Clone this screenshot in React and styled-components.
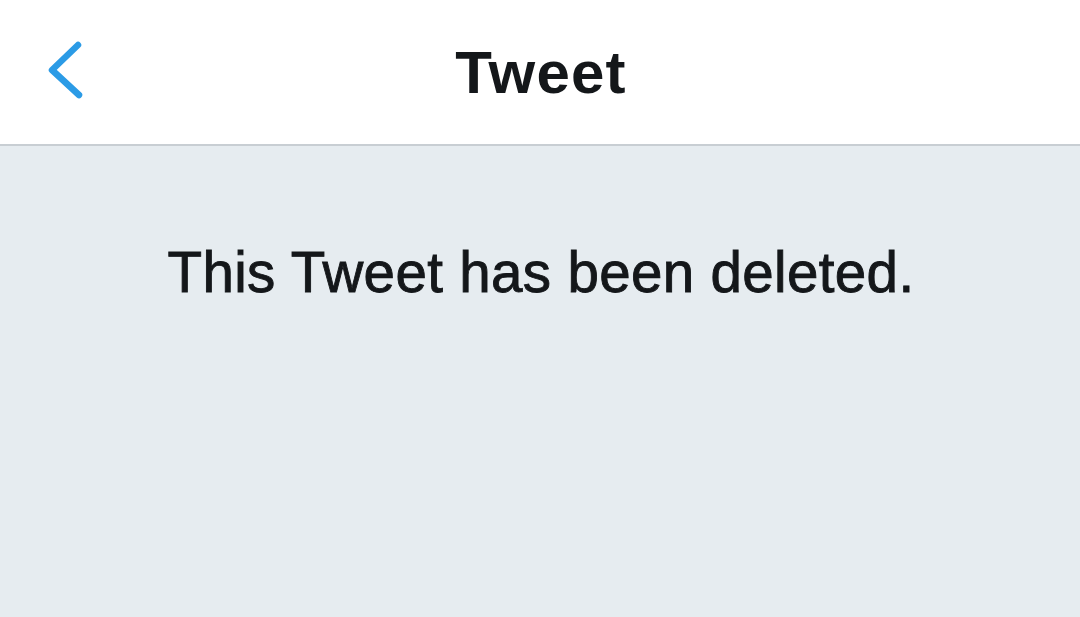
import React from "react";
import styled, { createGlobalStyle } from "styled-components";

const GlobalStyle = createGlobalStyle`
  html, body {
    margin: 0;
    padding: 0;
    height: 100%;
    background: #e6ecf0;
  }
  #root {
    height: 100%;
  }
`;

const Page = styled.div`
  display: flex;
  flex-direction: column;
  height: 100%;
  font-family: "Liberation Sans", Arial, sans-serif;
  color: #14171a;
`;

const Header = styled.header`
  position: relative;
  display: flex;
  align-items: center;
  justify-content: center;
  height: 144px;
  background: #ffffff;
  border-bottom: 2px solid #c8ced3;
  flex-shrink: 0;
`;

const BackButton = styled.button`
  position: absolute;
  left: 44px;
  top: 38px;
  width: 44px;
  height: 64px;
  padding: 0;
  border: 0;
  background: none;
  cursor: pointer;
`;

const Title = styled.h1`
  margin: 0 0 0 2px;
  font-size: 60px;
  font-weight: 700;
  letter-spacing: 1.2px;
`;

const Body = styled.main`
  flex: 1;
  display: flex;
  justify-content: center;
  padding-top: 95px;
  background: #e6ecf0;
`;

const Message = styled.p`
  margin: 0 0 0 2px;
  font-size: 56.5px;
  line-height: 64px;
  font-weight: 400;
  letter-spacing: 0.35px;
  -webkit-text-stroke: 0.9px #14171a;
`;

const Chevron = () => (
  <svg width="44" height="64" viewBox="0 0 44 64" fill="none">
    <path
      d="M34 7 L8 32 L35 57"
      stroke="#2b9be6"
      strokeWidth="6.5"
      strokeLinecap="round"
      strokeLinejoin="round"
    />
  </svg>
);

export default function App() {
  return (
    <Page>
      <GlobalStyle />
      <Header>
        <BackButton aria-label="Back">
          <Chevron />
        </BackButton>
        <Title>Tweet</Title>
      </Header>
      <Body>
        <Message>This Tweet has been deleted.</Message>
      </Body>
    </Page>
  );
}
